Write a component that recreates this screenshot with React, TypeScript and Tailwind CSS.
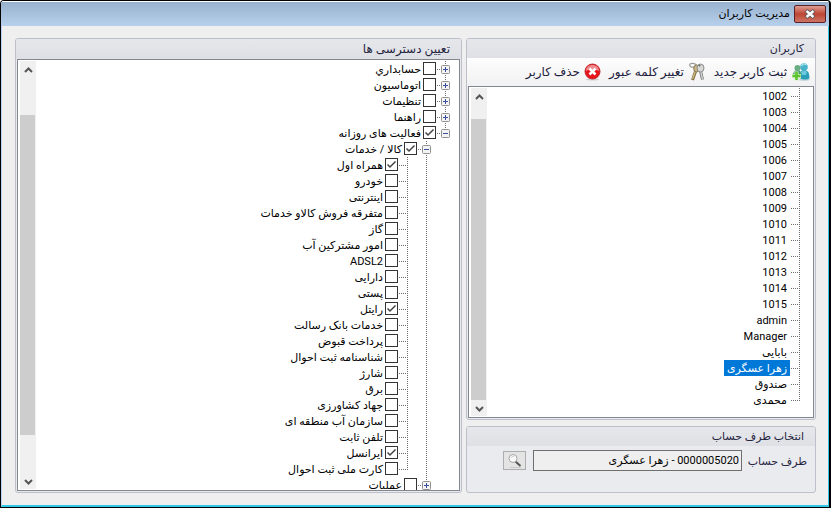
type Cell = 'blank' | 'line' | 'branch' | 'last' | 'plus' | 'minus' | 'minusEnd'

type Permission = {
  label: string
  cells: Cell[]
  checked?: boolean
}

const services: { label: string; checked?: boolean }[] = [
  { label: 'همراه اول', checked: true },
  { label: 'خودرو' },
  { label: 'اینترنتی' },
  { label: 'متفرقه فروش کالاو خدمات' },
  { label: 'گاز' },
  { label: 'امور مشترکین آب' },
  { label: 'ADSL2' },
  { label: 'دارایی' },
  { label: 'پستی' },
  { label: 'رایتل', checked: true },
  { label: 'خدمات بانک رسالت' },
  { label: 'پرداخت قبوض' },
  { label: 'شناسنامه ثبت احوال' },
  { label: 'شارژ' },
  { label: 'برق' },
  { label: 'جهاد کشاورزی' },
  { label: 'سازمان آب منطقه ای' },
  { label: 'تلفن ثابت' },
  { label: 'ایرانسل', checked: true },
  { label: 'کارت ملی ثبت احوال' },
]

const permissions: Permission[] = [
  { label: 'حسابداري', cells: ['plus'] },
  { label: 'اتوماسیون', cells: ['plus'] },
  { label: 'تنظیمات', cells: ['plus'] },
  { label: 'راهنما', cells: ['plus'] },
  { label: 'فعالیت های روزانه', cells: ['minusEnd'], checked: true },
  { label: 'کالا / خدمات', cells: ['blank', 'minus'], checked: true },
  ...services.map((service, index): Permission => ({
    ...service,
    cells: ['blank', 'line', index === services.length - 1 ? 'last' : 'branch'],
  })),
  { label: 'عملیات', cells: ['blank', 'plus'] },
]

const users = [
  '1002', '1003', '1004', '1005', '1006', '1007', '1008', '1009', '1010', '1011',
  '1012', '1013', '1014', '1015', 'admin', 'Manager', 'بابایی', 'زهرا عسگری', 'صندوق', 'محمدی',
]

const selectedUser = 'زهرا عسگری'

function TreeCell({ kind }: { kind: Cell }) {
  const expander = kind === 'plus' || kind.startsWith('minus')
  const ends = kind === 'last' || kind === 'minusEnd'

  return (
    <svg className="h-4 w-[19px] shrink-0" viewBox="0 0 19 16" fill="none" aria-hidden="true">
      {kind !== 'blank' && (
        <path d={ends ? 'M9.5 0V9' : 'M9.5 0V16'} stroke="#6e6e6e" strokeDasharray="1 1" />
      )}
      {kind !== 'blank' && kind !== 'line' && (
        <path d="M1 8.5H9" stroke="#6e6e6e" strokeDasharray="1 1" />
      )}
      {expander && (
        <>
          <rect x="5.5" y="4.5" width="8" height="8" rx="1" fill="#f4f4f4" stroke="#919191" />
          <path d="M7 8.5H12" stroke="#3c519e" />
          {kind === 'plus' && <path d="M9.5 6V11" stroke="#3c519e" />}
        </>
      )}
    </svg>
  )
}

function ScrollArrow({ down }: { down?: boolean }) {
  return (
    <svg className="h-4 w-4" viewBox="0 0 16 16" fill="none" aria-hidden="true">
      <path d={down ? 'M5 7l3.5 3.5L12 7' : 'M5 11l3.5-3.5L12 11'} stroke="#555" strokeWidth="2" />
    </svg>
  )
}

function ScrollBar({ end }: { end?: boolean }) {
  return (
    <div className="flex w-4 shrink-0 flex-col bg-[#f0f0f0]">
      <ScrollArrow />
      <div className={end ? 'h-[15px]' : 'h-[38px]'} />
      <div className="w-[15px] flex-1 self-end bg-[#cdcdcd]" />
      <div className={end ? 'h-0' : 'h-[38px]'} />
      <ScrollArrow down />
    </div>
  )
}

function CheckBox({ id, checked }: { id: string; checked?: boolean }) {
  return (
    <span className="relative mt-px h-[13px] w-[13px] shrink-0">
      <input
        id={id}
        type="checkbox"
        defaultChecked={checked}
        className="peer block h-[13px] w-[13px] appearance-none border border-[#333] bg-white"
      />
      <svg
        className="pointer-events-none absolute inset-0 hidden peer-checked:block"
        viewBox="0 0 13 13"
        fill="none"
        aria-hidden="true"
      >
        <path d="M2.5 6.5L5 9L10.5 3.5" stroke="#444" strokeWidth="1.5" />
      </svg>
    </span>
  )
}

function PanelTitle({ children, large }: { children: string; large?: boolean }) {
  return (
    <h2
      className={`shrink-0 bg-gradient-to-b from-[#e6e7eb] to-[#dfe0e5] px-[11px] leading-5 text-[#25253f] ${
        large ? 'h-5 text-xs' : 'h-[19px] text-[11px]'
      }`}
    >
      {children}
    </h2>
  )
}

function AddUserIcon() {
  return (
    <svg className="h-5 w-5" viewBox="0 0 20 20" fill="none" aria-hidden="true">
      <ellipse cx="13" cy="17.5" rx="6" ry="1.5" fill="#c5d5da" />
      <path d="M9 16V11C9.500 9 11 8 13 8S17.500 9 18 12L18.500 16C17 18 11 18 9 16Z" fill="#2a9db8" />
      <path d="M10 10Q13 7.500 16 10L15 13H11Z" fill="#6cc8dc" />
      <circle cx="13" cy="5" r="3.800" fill="#45b2ca" />
      <path d="M10.500 4Q12.500 .5 15.500 3" stroke="#a6e0ea" strokeWidth="1.500" />
      <path d="M1 13L4 8.500H9L10.500 14Z" fill="#4b9a6a" />
      <circle cx="6.500" cy="6" r="3" fill="#6aad82" />
      <path d="M5.500 9.500V18.500M1 14H10" stroke="#d5f0c4" strokeWidth="4" />
      <path d="M5.500 10V18M1.500 14H9.500" stroke="#5cc52d" strokeWidth="2.600" />
    </svg>
  )
}

function KeysIcon() {
  return (
    <svg className="h-5 w-[18px]" viewBox="0 0 18 20" fill="none" aria-hidden="true">
      <path d="M9 4C7 0 0 1 2 4C3 6 5 5 7 5" stroke="#9b9b9b" strokeWidth="1.200" />
      <path d="M8 8L4.500 18" stroke="#7d6c42" strokeWidth="3" />
      <path d="M7.500 9L4.500 17" stroke="#d4bf80" strokeWidth="1.300" />
      <ellipse cx="8.500" cy="6.500" rx="2.800" ry="3.500" fill="#c8b685" stroke="#8a7a52" />
      <path d="M12.500 9L14.500 17.500" stroke="#777" strokeWidth="3" />
      <path d="M12.500 9L14.500 17" stroke="#d8d8d8" strokeWidth="1.300" />
      <ellipse cx="12.500" cy="6" rx="3.500" ry="4" fill="#d8d8d6" stroke="#8d8d8b" />
      <circle cx="11.500" cy="3.500" r="1" fill="#666" />
    </svg>
  )
}

function DeleteIcon() {
  return (
    <svg className="h-[18px] w-[17px]" viewBox="0 0 17 18" fill="none" aria-hidden="true">
      <ellipse cx="8.500" cy="16.500" rx="6.500" ry="1" fill="#cfcfcf" />
      <circle cx="8.500" cy="8.500" r="7.500" fill="#e8141b" stroke="#c02a2e" />
      <path d="M2 8C2 4 5 2 8.500 2S15 4 15 8C11 6 6 6 2 8Z" fill="#f08a8d" />
      <path d="M5.500 5.500L11.500 11.500M11.500 5.500L5.500 11.500" stroke="#fff" strokeWidth="2.600" />
    </svg>
  )
}

function SearchIcon() {
  return (
    <svg className="h-4 w-4" viewBox="0 0 16 16" fill="none" aria-hidden="true">
      <path d="M3 14.500H14" stroke="#c9c9c9" />
      <path d="M8.500 8.500L13.500 13" stroke="#555" strokeWidth="2" />
      <circle cx="6" cy="5.500" r="4" fill="#fafafa" stroke="#a4a4a4" />
      <path d="M4 5Q4.500 3 7 3.500" stroke="#d0d0d0" />
    </svg>
  )
}

const actions = [
  { label: 'ثبت کاربر جدید', icon: <AddUserIcon /> },
  { label: 'تغییر کلمه عبور', icon: <KeysIcon /> },
  { label: 'حذف کاربر', icon: <DeleteIcon /> },
]

const panel = 'flex flex-col overflow-hidden rounded-[3px] border border-[#bdc0ca] bg-[#eaebef]'
const list = 'mx-px mb-px flex min-h-0 flex-1 border border-[#828790] bg-white'

export default function App() {
  return (
    <main
      dir="rtl"
      className="flex h-screen flex-col overflow-hidden rounded-t-[4px] border-t border-r-2 border-b border-l border-black bg-[#efefef] text-[11px] text-black [font-family:Roboto,'DejaVu_Sans',sans-serif]"
    >
      <header className="flex h-[25px] shrink-0 items-center gap-1 border-t border-white bg-gradient-to-b from-[#98b1ce] to-[#b7d0eb] pr-[3px]">
        <button
          type="button"
          aria-label="بستن"
          className="flex h-[18px] w-8 items-center justify-center rounded-[2px] border border-[#5a2028] bg-gradient-to-b from-[#dc9c92] via-[#bd4432] to-[#cd7465]"
        >
          <svg className="h-[10px] w-3" viewBox="0 0 12 10" fill="none" aria-hidden="true">
            <path d="M2 1.500L10 8.500M10 1.500L2 8.500" stroke="#55555f" strokeWidth="4" />
            <path d="M2.500 2L9.500 8M9.500 2L2.500 8" stroke="#fff" strokeWidth="2.400" />
          </svg>
        </button>
        <h1 className="leading-5">مدیریت کاربران</h1>
      </header>

      <div className="flex min-h-0 flex-1 gap-1 border-r border-b-2 border-l border-r-[#31c8e8] border-b-[#31c8e8] border-l-[#b7d0eb] pt-3 pr-3 pb-3 pl-[13px]">
        <div className="flex w-[350px] shrink-0 flex-col gap-[6px]">
          <section className={`${panel} min-h-0 flex-1`}>
            <PanelTitle>کاربران</PanelTitle>
            <div className="flex h-7 shrink-0 items-center gap-2 bg-gradient-to-b from-[#fdfdfd] to-[#f1f1f3] px-1 text-xs text-[#20203c]">
              {actions.map((action) => (
                <button key={action.label} type="button" className="flex items-center gap-1 whitespace-nowrap">
                  {action.icon}
                  {action.label}
                </button>
              ))}
            </div>
            <div className={list}>
              <ul className="min-w-0 flex-1 overflow-hidden pt-px pr-1">
                {users.map((user) => (
                  <li key={user} className="flex h-4 leading-[18px]">
                    <TreeCell kind={user === 'محمدی' ? 'last' : 'branch'} />
                    <span className={user === selectedUser ? 'bg-[#0078d7] px-[3px] text-white' : 'px-[3px]'}>
                      {user}
                    </span>
                  </li>
                ))}
              </ul>
              <div className="flex py-px pl-[2px]">
                <ScrollBar end />
              </div>
            </div>
          </section>

          <section className={`${panel} h-[67px] shrink-0`}>
            <PanelTitle>انتخاب طرف حساب</PanelTitle>
            <div className="flex items-center gap-[7px] pt-1 pr-2">
              <label htmlFor="account" className="w-[58px] pt-1 whitespace-nowrap text-[#25253f]">
                طرف حساب
              </label>
              <input
                id="account"
                readOnly
                defaultValue="0000005020 - زهرا عسگری"
                className="h-[21px] w-[209px] border border-[#6f6f6f] bg-[#efefef] px-[2px] text-black"
              />
              <button
                type="button"
                aria-label="جستجو"
                className="flex h-[19px] w-[23px] items-center justify-center border border-[#adadad] bg-[#e4e4e5]"
              >
                <SearchIcon />
              </button>
            </div>
          </section>
        </div>

        <section className={`${panel} min-w-0 flex-1`}>
          <PanelTitle large>تعیین دسترسی ها</PanelTitle>
          <div className={list}>
            <ul className="min-w-0 flex-1 overflow-hidden pt-px pr-1">
              {permissions.map((item, index) => (
                <li key={item.label} className="flex h-4 leading-[18px]">
                  {item.cells.map((kind, level) => (
                    <TreeCell key={level} kind={kind} />
                  ))}
                  <CheckBox id={`permission-${index}`} checked={item.checked} />
                  <label htmlFor={`permission-${index}`} className="px-[2px] whitespace-nowrap">
                    {item.label}
                  </label>
                </li>
              ))}
            </ul>
            <div className="flex py-px pl-[2px]">
              <ScrollBar />
            </div>
          </div>
        </section>
      </div>
    </main>
  )
}
